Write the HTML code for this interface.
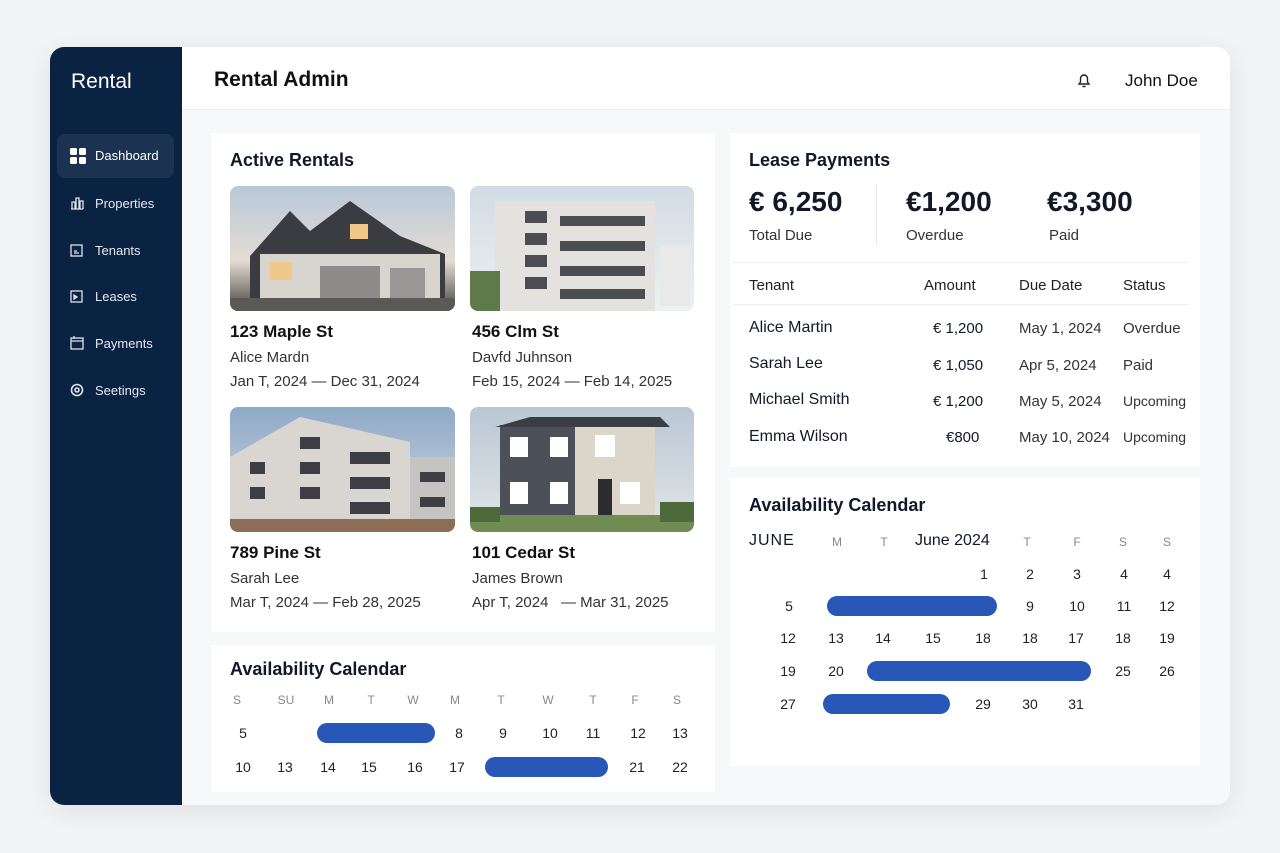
<!DOCTYPE html>
<html><head><meta charset="utf-8"><style>
*{margin:0;padding:0;box-sizing:border-box}
body{width:1280px;height:853px;background:#f2f3f5;font-family:"Liberation Sans",sans-serif;color:#111827;position:relative;overflow:hidden}
.a{position:absolute;white-space:nowrap}
.card{position:absolute;left:50px;top:47px;width:1180px;height:758px;background:#f7f8f9;border-radius:14px;overflow:hidden;box-shadow:0 6px 24px rgba(0,0,0,.08)}
.side{position:absolute;left:0;top:0;width:132px;height:758px;background:#0b2342}
.nav{position:absolute;left:45px;color:#e5e9f0;font-size:13px}
.ic{position:absolute;left:20px}
.panel{position:absolute;background:#fff}
.img{position:absolute;border-radius:8px;overflow:hidden}
.t1{font-size:17px;font-weight:bold;color:#111}
.t2{font-size:15px;color:#333}
.bar{position:absolute;background:#2857b8;border-radius:11px;height:20px}
.n{position:absolute;font-size:14px;color:#222;text-align:center;width:30px}
.h{position:absolute;font-size:12px;color:#888;text-align:center;width:30px}
</style></head><body>
<div class="card">
 <div class="side">
  <div class="a" style="left:21px;top:23px;color:#fff;font-size:21px">Rental</div>
  <div class="a" style="left:7px;top:87px;width:117px;height:44px;background:#1b3351;border-radius:8px"></div>
  <svg class="ic" style="top:101px" width="16" height="16"><rect x="0" y="0" width="7" height="7" rx="1.5" fill="#fff"/><rect x="9" y="0" width="7" height="7" rx="1.5" fill="#fff"/><rect x="0" y="9" width="7" height="7" rx="1.5" fill="#fff"/><rect x="9" y="9" width="7" height="7" rx="1.5" fill="#fff"/></svg>
  <div class="nav" style="top:101px;color:#fff">Dashboard</div>
  <svg class="ic" style="top:149px" width="14" height="14" fill="none" stroke="#dfe4ea" stroke-width="1.3"><path d="M1 13h12M2 13V6h3v7M6 13V2h3v11M10 13V5h3v8"/></svg>
  <div class="nav" style="top:149px">Properties</div>
  <svg class="ic" style="top:197px" width="13" height="13" fill="none" stroke="#dfe4ea" stroke-width="1.3"><rect x="1" y="1" width="11" height="11"/><path d="M4 7h3M4 9h5"/></svg>
  <div class="nav" style="top:196px">Tenants</div>
  <svg class="ic" style="top:243px" width="13" height="13" fill="none" stroke="#dfe4ea" stroke-width="1.3"><rect x="1" y="1" width="11" height="11"/><path d="M4 5l3 2-3 2z" fill="#dfe4ea"/></svg>
  <div class="nav" style="top:242px">Leases</div>
  <svg class="ic" style="top:289px" width="14" height="14" fill="none" stroke="#dfe4ea" stroke-width="1.3"><rect x="1" y="2" width="12" height="11"/><path d="M1 5h12M4 0v3"/></svg>
  <div class="nav" style="top:289px">Payments</div>
  <svg class="ic" style="top:336px" width="14" height="14" fill="none" stroke="#dfe4ea" stroke-width="1.6"><circle cx="7" cy="7" r="5.5"/><circle cx="7" cy="7" r="2"/></svg>
  <div class="nav" style="top:336px">Seetings</div>
 </div>
 <div class="a" style="left:132px;top:0;width:1048px;height:63px;background:#fff;border-bottom:1px solid #eceef1"></div>
 <div class="a" style="left:164px;top:21px;font-size:21px;font-weight:bold;color:#111">Rental Admin</div>
 <svg class="a" style="left:1027px;top:25px" width="14" height="17" fill="none" stroke="#222" stroke-width="1.4"><path d="M2 12h10l-1.5-2V6.5a3.5 3.5 0 0 0-7 0V10z"/><path d="M5.5 14.5h3"/></svg>
 <div class="a" style="left:1075px;top:24px;font-size:17px;color:#111">John Doe</div>

 <div class="panel" style="left:161px;top:86px;width:504px;height:499px"></div>
 <div class="panel" style="left:161px;top:598px;width:504px;height:147px"></div>
 <div class="panel" style="left:680px;top:86px;width:470px;height:334px"></div>
 <div class="panel" style="left:680px;top:431px;width:470px;height:288px"></div>
</div>

<div class="a" style="left:230px;top:150px;font-size:18px;font-weight:bold">Active Rentals</div>
<!-- images -->
<div class="img" style="left:230px;top:186px;width:225px;height:125px;background:linear-gradient(#b8c8d8,#e4dcd2 60%,#6d6a66 90%)">
 <svg width="225" height="125"><polygon points="20,70 60,25 80,45 120,15 170,50 215,68 215,115 20,115" fill="#3a3c42"/><rect x="30" y="68" width="180" height="47" fill="#d8d4ce"/><rect x="90" y="80" width="60" height="35" fill="#8d8c8a"/><rect x="160" y="82" width="35" height="33" fill="#9a9896"/><rect x="40" y="76" width="22" height="18" fill="#f0c98a"/><rect x="120" y="38" width="18" height="15" fill="#f0c98a"/><rect x="0" y="112" width="225" height="13" fill="#5b5855"/></svg></div>
<div class="img" style="left:470px;top:186px;width:224px;height:125px;background:linear-gradient(#d2dbe4,#eef0f2)">
 <svg width="224" height="125"><rect x="25" y="15" width="160" height="110" fill="#e4e2de"/><g fill="#4a4d52"><rect x="55" y="25" width="22" height="12"/><rect x="55" y="47" width="22" height="12"/><rect x="55" y="69" width="22" height="12"/><rect x="55" y="91" width="22" height="12"/><rect x="90" y="30" width="85" height="10"/><rect x="90" y="55" width="85" height="10"/><rect x="90" y="80" width="85" height="10"/><rect x="90" y="103" width="85" height="10"/></g><rect x="0" y="85" width="30" height="40" fill="#5d7a48"/><rect x="190" y="60" width="30" height="60" fill="#e9e9ea"/></svg></div>
<div class="img" style="left:230px;top:407px;width:225px;height:125px;background:linear-gradient(#8fa9c6,#d2dbe6)">
 <svg width="225" height="125"><polygon points="0,50 70,10 180,35 180,125 0,125" fill="#d9d6d2"/><rect x="180" y="50" width="45" height="75" fill="#c6c4c2"/><g fill="#3e3f44"><rect x="20" y="55" width="15" height="12"/><rect x="20" y="80" width="15" height="12"/><rect x="70" y="30" width="20" height="12"/><rect x="70" y="55" width="20" height="12"/><rect x="70" y="80" width="20" height="12"/><rect x="120" y="45" width="40" height="12"/><rect x="120" y="70" width="40" height="12"/><rect x="120" y="95" width="40" height="12"/><rect x="190" y="65" width="25" height="10"/><rect x="190" y="90" width="25" height="10"/></g><rect x="0" y="112" width="225" height="13" fill="#8c6d55"/></svg></div>
<div class="img" style="left:470px;top:407px;width:224px;height:125px;background:linear-gradient(#b9c7d3,#e2e6ea)">
 <svg width="224" height="125"><rect x="30" y="18" width="75" height="95" fill="#4c5058"/><rect x="105" y="18" width="80" height="95" fill="#dcd6ca"/><polygon points="25,20 60,10 190,10 200,20" fill="#3a3d44"/><g fill="#fff"><rect x="40" y="30" width="18" height="20"/><rect x="80" y="30" width="18" height="20"/><rect x="40" y="75" width="18" height="22"/><rect x="80" y="75" width="18" height="22"/><rect x="125" y="28" width="20" height="22"/><rect x="150" y="75" width="20" height="22"/></g><rect x="128" y="72" width="14" height="40" fill="#2a2c30"/><rect x="0" y="108" width="224" height="17" fill="#6f8c52"/><rect x="0" y="100" width="30" height="15" fill="#4d6b3a"/><rect x="190" y="95" width="34" height="20" fill="#4d6b3a"/></svg></div>

<div class="a t1" style="left:230px;top:322px">123 Maple St</div>
<div class="a t2" style="left:230px;top:349px">Alice Mardn</div>
<div class="a t2" style="left:230px;top:373px">Jan T, 2024 — Dec 31, 2024</div>
<div class="a t1" style="left:472px;top:322px">456 Clm St</div>
<div class="a t2" style="left:472px;top:349px">Davfd Juhnson</div>
<div class="a t2" style="left:472px;top:373px">Feb 15, 2024 — Feb 14, 2025</div>
<div class="a t1" style="left:230px;top:543px">789 Pine St</div>
<div class="a t2" style="left:230px;top:570px">Sarah Lee</div>
<div class="a t2" style="left:230px;top:594px">Mar T, 2024 — Feb 28, 2025</div>
<div class="a t1" style="left:472px;top:543px">101 Cedar St</div>
<div class="a t2" style="left:472px;top:570px">James Brown</div>
<div class="a t2" style="left:472px;top:594px">Apr T, 2024 &nbsp; — Mar 31, 2025</div>

<div class="a" style="left:230px;top:659px;font-size:18px;font-weight:bold">Availability Calendar</div>
<div class="h" style="left:222px;top:693px">S</div><div class="h" style="left:271px;top:693px">SU</div><div class="h" style="left:314px;top:693px">M</div><div class="h" style="left:356px;top:693px">T</div><div class="h" style="left:398px;top:693px">W</div><div class="h" style="left:440px;top:693px">M</div><div class="h" style="left:486px;top:693px">T</div><div class="h" style="left:533px;top:693px">W</div><div class="h" style="left:578px;top:693px">T</div><div class="h" style="left:620px;top:693px">F</div><div class="h" style="left:662px;top:693px">S</div>
<div class="n" style="left:228px;top:725px">5</div><div class="bar" style="left:317px;top:723px;width:118px"></div><div class="n" style="left:444px;top:725px">8</div><div class="n" style="left:488px;top:725px">9</div><div class="n" style="left:535px;top:725px">10</div><div class="n" style="left:578px;top:725px">11</div><div class="n" style="left:623px;top:725px">12</div><div class="n" style="left:665px;top:725px">13</div>
<div class="n" style="left:228px;top:759px">10</div><div class="n" style="left:270px;top:759px">13</div><div class="n" style="left:313px;top:759px">14</div><div class="n" style="left:354px;top:759px">15</div><div class="n" style="left:400px;top:759px">16</div><div class="n" style="left:442px;top:759px">17</div><div class="bar" style="left:485px;top:757px;width:123px"></div><div class="n" style="left:622px;top:759px">21</div><div class="n" style="left:665px;top:759px">22</div>

<div class="a" style="left:749px;top:150px;font-size:18px;font-weight:bold">Lease Payments</div>
<div class="a" style="left:749px;top:186px;font-size:28px;font-weight:bold">€ 6,250</div>
<div class="a" style="left:749px;top:227px;font-size:15px;color:#333">Total Due</div>
<div class="a" style="left:876px;top:183px;width:1px;height:62px;background:#e6e8eb"></div>
<div class="a" style="left:906px;top:186px;font-size:28px;font-weight:bold">€1,200</div>
<div class="a" style="left:906px;top:227px;font-size:15px;color:#333">Overdue</div>
<div class="a" style="left:1047px;top:186px;font-size:28px;font-weight:bold">€3,300</div>
<div class="a" style="left:1049px;top:227px;font-size:15px;color:#333">Paid</div>
<div class="a" style="left:733px;top:262px;width:455px;height:1px;background:#eceef0"></div>
<div class="a" style="left:749px;top:277px;font-size:15px;color:#222">Tenant</div>
<div class="a" style="left:924px;top:277px;font-size:15px;color:#222">Amount</div>
<div class="a" style="left:1019px;top:277px;font-size:15px;color:#222">Due Date</div>
<div class="a" style="left:1123px;top:277px;font-size:15px;color:#222">Status</div>
<div class="a" style="left:733px;top:304px;width:455px;height:1px;background:#eceef0"></div>
<div class="a" style="left:749px;top:319px;font-size:16px">Alice Martin</div><div class="a" style="left:933px;top:320px;font-size:15px">€ 1,200</div><div class="a" style="left:1019px;top:320px;font-size:15px;color:#333">May 1, 2024</div><div class="a" style="left:1123px;top:320px;font-size:15px;color:#333">Overdue</div>
<div class="a" style="left:749px;top:355px;font-size:16px">Sarah Lee</div><div class="a" style="left:933px;top:357px;font-size:15px">€ 1,050</div><div class="a" style="left:1019px;top:357px;font-size:15px;color:#333">Apr 5, 2024</div><div class="a" style="left:1123px;top:357px;font-size:15px;color:#333">Paid</div>
<div class="a" style="left:749px;top:391px;font-size:16px">Michael Smith</div><div class="a" style="left:933px;top:393px;font-size:15px">€ 1,200</div><div class="a" style="left:1019px;top:393px;font-size:15px;color:#333">May 5, 2024</div><div class="a" style="left:1123px;top:393px;font-size:14px;color:#333">Upcoming</div>
<div class="a" style="left:749px;top:428px;font-size:16px">Emma Wilson</div><div class="a" style="left:946px;top:429px;font-size:15px">€800</div><div class="a" style="left:1019px;top:429px;font-size:15px;color:#333">May 10, 2024</div><div class="a" style="left:1123px;top:429px;font-size:14px;color:#333">Upcoming</div>

<div class="a" style="left:749px;top:495px;font-size:18px;font-weight:bold">Availability Calendar</div>
<div class="a" style="left:749px;top:532px;font-size:16px;letter-spacing:1px">JUNE</div>
<div class="h" style="left:822px;top:535px">M</div><div class="h" style="left:869px;top:535px">T</div>
<div class="a" style="left:915px;top:532px;font-size:16px">June 2024</div>
<div class="h" style="left:1012px;top:535px">T</div><div class="h" style="left:1062px;top:535px">F</div><div class="h" style="left:1108px;top:535px">S</div><div class="h" style="left:1152px;top:535px">S</div>
<div class="n" style="left:969px;top:566px">1</div><div class="n" style="left:1015px;top:566px">2</div><div class="n" style="left:1062px;top:566px">3</div><div class="n" style="left:1109px;top:566px">4</div><div class="n" style="left:1152px;top:566px">4</div>
<div class="n" style="left:774px;top:598px">5</div><div class="bar" style="left:827px;top:596px;width:170px"></div><div class="n" style="left:1015px;top:598px">9</div><div class="n" style="left:1062px;top:598px">10</div><div class="n" style="left:1109px;top:598px">11</div><div class="n" style="left:1152px;top:598px">12</div>
<div class="n" style="left:773px;top:630px">12</div><div class="n" style="left:821px;top:630px">13</div><div class="n" style="left:868px;top:630px">14</div><div class="n" style="left:918px;top:630px">15</div><div class="n" style="left:968px;top:630px">18</div><div class="n" style="left:1015px;top:630px">18</div><div class="n" style="left:1061px;top:630px">17</div><div class="n" style="left:1108px;top:630px">18</div><div class="n" style="left:1152px;top:630px">19</div>
<div class="n" style="left:773px;top:663px">19</div><div class="n" style="left:821px;top:663px">20</div><div class="bar" style="left:867px;top:661px;width:224px"></div><div class="n" style="left:1108px;top:663px">25</div><div class="n" style="left:1152px;top:663px">26</div>
<div class="n" style="left:773px;top:696px">27</div><div class="bar" style="left:823px;top:694px;width:127px"></div><div class="n" style="left:968px;top:696px">29</div><div class="n" style="left:1015px;top:696px">30</div><div class="n" style="left:1061px;top:696px">31</div>
</body></html>
